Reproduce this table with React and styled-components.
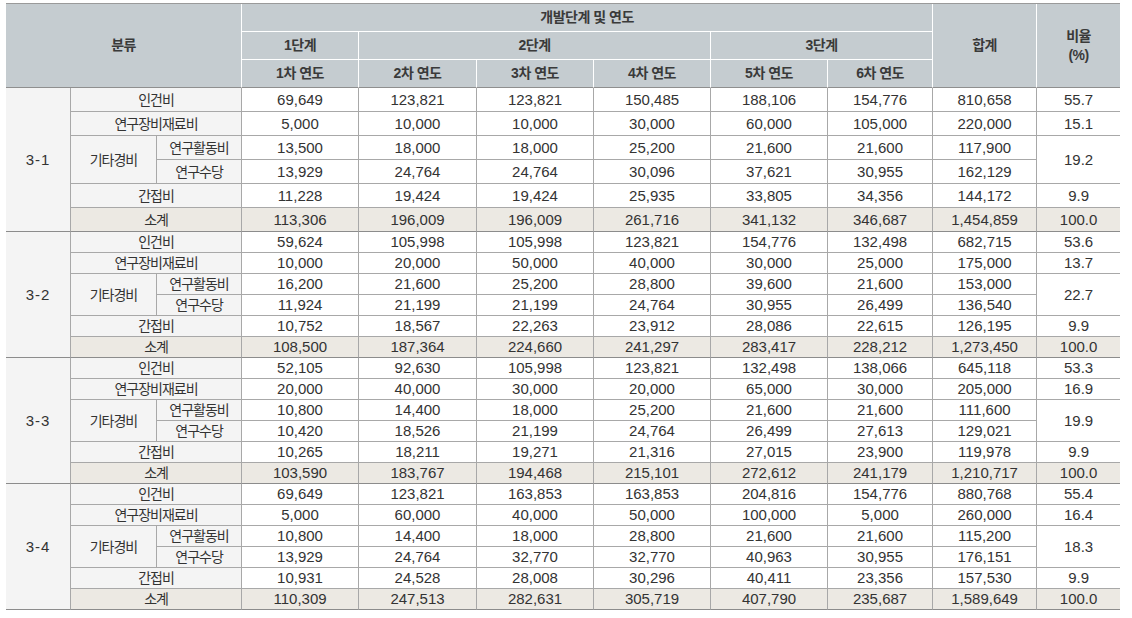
import React from "react";
import styled, { createGlobalStyle } from "styled-components";

const GlobalStyle = createGlobalStyle`
  body {
    margin: 0;
    background: #ffffff;
  }
`;

// 표 바깥 여백
const Page = styled.div`
  padding: 3px 0 0 6px;
  font-family: "Liberation Sans", "Noto Sans CJK KR", sans-serif;
  color: #333333;
`;

const Table = styled.table`
  width: 1114px;
  table-layout: fixed;
  border-collapse: separate;
  border-spacing: 0;
  border-top: 1px solid #9a9a9a;
`;

const HeadRow = styled.tr`
  height: 28px;
`;

const BodyRow = styled.tr`
  height: ${(p) => p.$h}px;
`;

// 머리글 칸
const HeadCell = styled.th`
  padding: 0;
  background: #c5ccd0;
  color: #3a3a3a;
  font-size: 14px;
  font-weight: bold;
  letter-spacing: -0.5px;
  line-height: 19px;
  text-align: center;
  vertical-align: middle;
  box-sizing: border-box;
  border-right: ${(p) => (p.$last ? "none" : "1px solid #ffffff")};
  border-bottom: 1px solid ${(p) => (p.$edge ? "#8f8f8f" : "#ffffff")};
`;

const tones = {
  label: "#f4f4f4",
  data: "#ffffff",
  sum: "#ece9e3",
};

// 본문 칸
const Cell = styled.td`
  padding: 0;
  text-align: center;
  vertical-align: middle;
  box-sizing: border-box;
  font-size: ${(p) => (p.$kor ? "14px" : "15px")};
  letter-spacing: ${(p) => (p.$kor ? "-1px" : "0")};
  line-height: 18px;
  background: ${(p) => tones[p.$tone || "data"]};
  border-right: ${(p) => (p.$last ? "none" : "1px solid #a8a8a8")};
  border-bottom: 1px solid ${(p) => (p.$close ? "#8c8c8c" : "#a8a8a8")};
`;

const GroupCell = styled(Cell)`
  letter-spacing: 1px;
`;

const widths = [65, 86, 85, 117, 118, 117, 117, 117, 105, 104, 83];

const LABELS = ["인건비", "연구장비재료비", "연구활동비", "연구수당", "간접비", "소계"];

const groups = [
  {
    id: "3-1",
    h: 24,
    rows: [
      ["69,649", "123,821", "123,821", "150,485", "188,106", "154,776", "810,658", "55.7"],
      ["5,000", "10,000", "10,000", "30,000", "60,000", "105,000", "220,000", "15.1"],
      ["13,500", "18,000", "18,000", "25,200", "21,600", "21,600", "117,900", "19.2"],
      ["13,929", "24,764", "24,764", "30,096", "37,621", "30,955", "162,129"],
      ["11,228", "19,424", "19,424", "25,935", "33,805", "34,356", "144,172", "9.9"],
      ["113,306", "196,009", "196,009", "261,716", "341,132", "346,687", "1,454,859", "100.0"],
    ],
  },
  {
    id: "3-2",
    h: 21,
    rows: [
      ["59,624", "105,998", "105,998", "123,821", "154,776", "132,498", "682,715", "53.6"],
      ["10,000", "20,000", "50,000", "40,000", "30,000", "25,000", "175,000", "13.7"],
      ["16,200", "21,600", "25,200", "28,800", "39,600", "21,600", "153,000", "22.7"],
      ["11,924", "21,199", "21,199", "24,764", "30,955", "26,499", "136,540"],
      ["10,752", "18,567", "22,263", "23,912", "28,086", "22,615", "126,195", "9.9"],
      ["108,500", "187,364", "224,660", "241,297", "283,417", "228,212", "1,273,450", "100.0"],
    ],
  },
  {
    id: "3-3",
    h: 21,
    rows: [
      ["52,105", "92,630", "105,998", "123,821", "132,498", "138,066", "645,118", "53.3"],
      ["20,000", "40,000", "30,000", "20,000", "65,000", "30,000", "205,000", "16.9"],
      ["10,800", "14,400", "18,000", "25,200", "21,600", "21,600", "111,600", "19.9"],
      ["10,420", "18,526", "21,199", "24,764", "26,499", "27,613", "129,021"],
      ["10,265", "18,211", "19,271", "21,316", "27,015", "23,900", "119,978", "9.9"],
      ["103,590", "183,767", "194,468", "215,101", "272,612", "241,179", "1,210,717", "100.0"],
    ],
  },
  {
    id: "3-4",
    h: 21,
    rows: [
      ["69,649", "123,821", "163,853", "163,853", "204,816", "154,776", "880,768", "55.4"],
      ["5,000", "60,000", "40,000", "50,000", "100,000", "5,000", "260,000", "16.4"],
      ["10,800", "14,400", "18,000", "28,800", "21,600", "21,600", "115,200", "18.3"],
      ["13,929", "24,764", "32,770", "32,770", "40,963", "30,955", "176,151"],
      ["10,931", "24,528", "28,008", "30,296", "40,411", "23,356", "157,530", "9.9"],
      ["110,309", "247,513", "282,631", "305,719", "407,790", "235,687", "1,589,649", "100.0"],
    ],
  },
];

const Group = ({ group }) =>
  group.rows.map((values, i) => {
    const isSum = i === 5;
    const tone = isSum ? "sum" : "data";
    const nums = values.slice(0, 7);
    const ratio = values[7];
    return (
      <BodyRow key={i} $h={group.h}>
        {i === 0 && (
          <GroupCell rowSpan={6} $tone="label" $close>
            {group.id}
          </GroupCell>
        )}
        {i === 2 && (
          <Cell rowSpan={2} $tone="label" $kor>
            기타경비
          </Cell>
        )}
        {i === 2 || i === 3 ? (
          <Cell $tone="label" $kor>
            {LABELS[i]}
          </Cell>
        ) : (
          <Cell colSpan={2} $tone={isSum ? "sum" : "label"} $close={isSum} $kor>
            {LABELS[i]}
          </Cell>
        )}
        {nums.map((n, j) => (
          <Cell key={j} $tone={tone} $close={isSum}>
            {n}
          </Cell>
        ))}
        {i !== 3 && (
          <Cell rowSpan={i === 2 ? 2 : 1} $tone={tone} $close={isSum} $last>
            {ratio}
          </Cell>
        )}
      </BodyRow>
    );
  });

const App = () => {
  return (
    <Page>
      <GlobalStyle />
      <Table>
        <colgroup>
          {widths.map((w, i) => (
            <col key={i} style={{ width: w }} />
          ))}
        </colgroup>
        <thead>
          <HeadRow>
            <HeadCell rowSpan={3} colSpan={3} $edge>
              분류
            </HeadCell>
            <HeadCell colSpan={6}>개발단계 및 연도</HeadCell>
            <HeadCell rowSpan={3} $edge>
              합계
            </HeadCell>
            <HeadCell rowSpan={3} $edge $last>
              비율
              <br />
              (%)
            </HeadCell>
          </HeadRow>
          <HeadRow>
            <HeadCell>1단계</HeadCell>
            <HeadCell colSpan={3}>2단계</HeadCell>
            <HeadCell colSpan={2}>3단계</HeadCell>
          </HeadRow>
          <HeadRow>
            {[1, 2, 3, 4, 5, 6].map((n) => (
              <HeadCell key={n} $edge>
                {n}차 연도
              </HeadCell>
            ))}
          </HeadRow>
        </thead>
        <tbody>
          {groups.map((g) => (
            <Group key={g.id} group={g} />
          ))}
        </tbody>
      </Table>
    </Page>
  );
};

export default App;
